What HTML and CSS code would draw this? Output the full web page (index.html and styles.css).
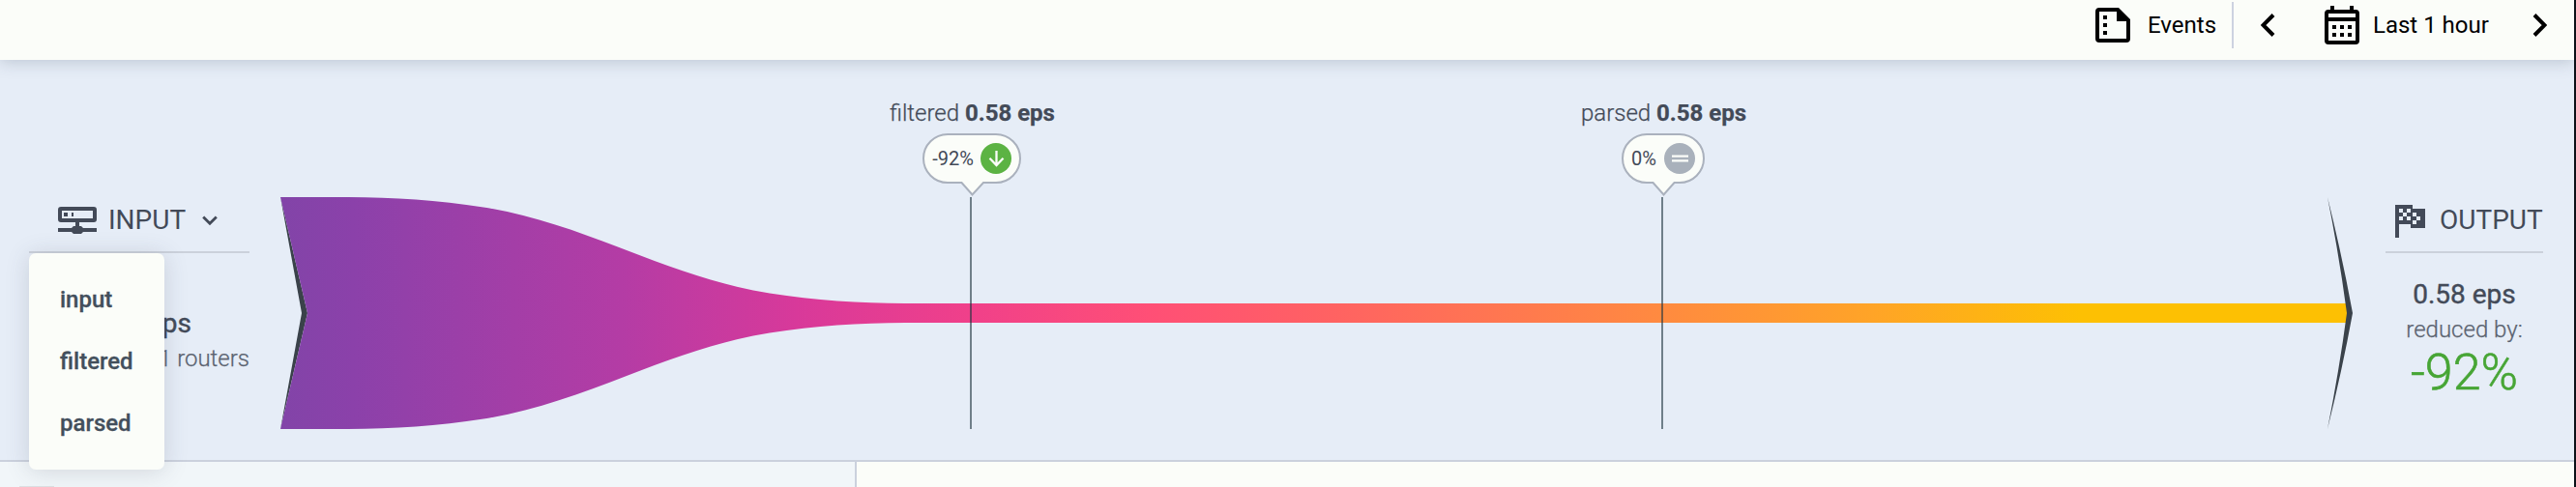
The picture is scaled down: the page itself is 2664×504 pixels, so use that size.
FILE: index.html
```html
<!DOCTYPE html>
<html lang="en">
<head>
<meta charset="utf-8">
<title>Pipeline</title>
<link rel="stylesheet" href="styles.css">
</head>
<body>
<div class="page">
  <header class="topbar">
    <div class="tool events">
      <svg width="36" height="36" viewBox="0 0 36 36"><path fill-rule="evenodd" d="M4 0H24L36 12V32Q36 36 32 36H4Q0 36 0 32V4Q0 0 4 0ZM4 4V32H32V14H22V4Z"/><path d="M8 8h4v4H8zM8 16h4v4H8zM8 24h4v4H8z"/></svg>
      <span>Events</span>
    </div>
    <div class="range">
      <svg class="prev" width="15" height="24" viewBox="0 0 15 24"><path class="chev" d="M13 1.500 2.500 12 13 22.500"/></svg>
      <svg class="calendar" width="36" height="40" viewBox="0 0 36 40"><path fill-rule="evenodd" d="M6 0h4v4h16V0h4v4h2q4 0 4 4v28q0 4-4 4H4q-4 0-4-4V8q0-4 4-4h2zM4 8v4h28V8zM4 16v20h28V16z"/><path d="M8 20h4v4H8zM16 20h4v4h-4zM24 20h4v4h-4zM8 28h4v4H8zM16 28h4v4h-4zM24 28h4v4h-4z"/></svg>
      <span>Last 1 hour</span>
      <svg class="next" width="15" height="24" viewBox="0 0 15 24"><path class="chev" d="M2 1.500 12.500 12 2 22.500"/></svg>
    </div>
  </header>

  <main class="flow">
    <section class="side side-in">
      <div class="heading">
        <svg width="40" height="28" viewBox="0 0 40 28"><path fill-rule="evenodd" d="M3 0H37Q40 0 40 3V13Q40 16 37 16H22V20H24L26 22H40V26H26L24 28H16L14 26H0V22H14L16 20H18V16H3Q0 16 0 13V3Q0 0 3 0ZM4 4V12H36V4Z"/><path d="M6 6h4v4H6zM14 6h2v4h-2z"/></svg>
        <span>INPUT</span>
        <svg class="caret" width="16" height="11" viewBox="0 0 16 11"><path d="M1.200 1.500 8 8.300 14.800 1.500"/></svg>
      </div>
      <div class="eps">eps</div>
      <div class="note">1 routers</div>
      <div class="menu">
        <div class="item">input</div>
        <div class="item">filtered</div>
        <div class="item">parsed</div>
      </div>
    </section>

    <section class="chart">
      <svg class="funnel" width="2144" height="240" viewBox="0 0 2144 240">
        <defs>
          <linearGradient id="stream" gradientUnits="userSpaceOnUse" x1="0" y1="0" x2="2138" y2="0">
            <stop offset="0" stop-color="#8244a8"/>
            <stop offset=".035" stop-color="#8b41aa"/>
            <stop offset=".165" stop-color="#b43ca5"/>
            <stop offset=".25" stop-color="#d8399a"/>
            <stop offset=".333" stop-color="#f0408a"/>
            <stop offset=".42" stop-color="#ff4f76"/>
            <stop offset=".5" stop-color="#ff6064"/>
            <stop offset=".667" stop-color="#ff8a40"/>
            <stop offset=".77" stop-color="#ffa427"/>
            <stop offset=".87" stop-color="#fdc003"/>
            <stop offset="1" stop-color="#fdc003"/>
          </linearGradient>
        </defs>
        <path fill="#3a424a" d="M0 0 28 120 0 240 22 120Z"/>
        <path fill="url(#stream)" d="M0 0H70C117 0 163 3.300 210 10.500C259.300 18.100 308.700 36 358 55C407 74 456.700 91.900 506 99.500C553 106.700 599 110 646 110H2138V130H646C599 130 553 133.300 506 140.500C456.700 148.100 407 166 358 185C308.700 204 259.300 221.900 210 229.500C163 236.700 117 240 70 240H0L28 120Z"/>
        <path fill="#3a424a" d="M2117 0Q2132 60 2143 120Q2132 180 2117 240Q2129 180 2137 120Q2129 60 2117 0Z"/>
        <path class="mark" d="M714 0V240M1429 0V240"/>
      </svg>
      <div class="marker marker-filtered">
        <div class="label">filtered <b>0.58 eps</b></div>
        <div class="bubble">
          <svg class="shell" width="102" height="66" viewBox="0 0 102 66"><path d="M26 1H76A25 25 0 0 1 76 51H63L51.500 63.500 40.500 51H26A25 25 0 0 1 26 1Z"/></svg>
          <span>-92%</span>
          <svg width="32" height="32" viewBox="0 0 32 32"><circle cx="16" cy="16" r="16" fill="#5cb343"/><path class="glyph" d="M16.500 8V23M9.500 15.800 16.500 23 23.500 15.800"/></svg>
        </div>
      </div>
      <div class="marker marker-parsed">
        <div class="label">parsed <b>0.58 eps</b></div>
        <div class="bubble small">
          <svg class="shell" width="86" height="66" viewBox="0 0 86 66"><path d="M26 1H60A25 25 0 0 1 60 51H54.500L43.500 63.500 32.500 51H26A25 25 0 0 1 26 1Z"/></svg>
          <span>0%</span>
          <svg width="32" height="32" viewBox="0 0 32 32"><circle cx="16" cy="16" r="16" fill="#a9b1bb"/><path class="glyph" d="M8 13.700H25M8 18.300H25"/></svg>
        </div>
      </div>
    </section>

    <section class="side side-out">
      <div class="heading">
        <svg width="31" height="34" viewBox="0 0 31 34"><path d="M0 0H18V4H31V24H16V20H4V34H0Z"/><path fill="#e6edf7" d="M4 4h4v4H4zM12 4h4v4h-4zM8 8h4v4H8zM4 12h4v4H4zM12 12h4v4h-4zM18 8h4v4h-4zM22 12h4v4h-4zM18 16h4v4h-4z"/></svg>
        <span>OUTPUT</span>
      </div>
      <div class="eps">0.58 eps</div>
      <div class="note">reduced by:</div>
      <div class="delta">-92%</div>
    </section>
  </main>

  <div class="panes">
    <div class="pane-left"><div class="stub"></div></div>
    <div class="pane-right"></div>
  </div>
</div>
</body>
</html>
```
FILE: styles.css
```css
* { box-sizing: border-box; }
body { margin: 0; background: #0c1118; font-family: Roboto, "Liberation Sans", sans-serif; }
svg { display: block; flex: none; }
.page { width: 2662px; height: 504px; overflow: hidden; background: #fbfdf9; display: flex; flex-direction: column; }

.topbar { position: relative; z-index: 2; height: 62px; flex: none; display: flex; justify-content: flex-end; padding: 2px 27px 0 0; background: #fbfdf9; box-shadow: 0 2px 16px rgba(60, 75, 100, .25); font-size: 24px; line-height: 48px; color: #000; }
.tool, .range { display: flex; height: 48px; align-items: center; }
.events { width: 143px; border-right: 2px solid #cdd2e0; }
.events span { margin-left: 18px; }
.range { width: 325px; }
.prev { margin-left: 28px; }
.calendar { margin-left: 51px; }
.range span { margin-left: 14px; }
.next { margin-left: auto; margin-right: 1px; }
.chev { fill: none; stroke: #000; stroke-width: 4; }

.flow { height: 416px; flex: none; display: flex; background: #e6edf7; border-bottom: 2px solid #cbd1dd; color: #434a58; }
.side { position: relative; display: flex; flex-direction: column; }
.side-in { width: 228px; margin: 130px 32px 0 30px; }
.side-out { width: 163px; margin: 130px 32px 0 33px; align-items: center; }
.heading { width: 100%; height: 70px; display: flex; align-items: center; padding-top: 4px; border-bottom: 2px solid #cbd1db; font-size: 28px; line-height: 64px; fill: #434a58; }
.side-in .heading { padding-left: 30px; }
.side-out .heading { padding-left: 10px; }
.side-in .heading span { margin-left: 12px; }
.side-out .heading span { margin-left: 15px; }
.side-out .heading svg { margin-top: 2px; }
.caret { margin-left: 17px; fill: none; stroke: #434a58; stroke-width: 2.800; }
.eps { margin-top: 25px; font-size: 28px; line-height: 36px; -webkit-text-stroke: .4px; }
.side-in .eps { margin-top: 55px; padding-left: 123px; }
.note { font-size: 24px; line-height: 36px; font-weight: 300; color: #5b6370; -webkit-text-stroke: .25px; }
.side-in .note { text-align: right; }
.delta { margin-top: 1px; font-size: 52px; line-height: 52px; font-weight: 300; color: #47a535; -webkit-text-stroke: .6px; }

.menu { position: absolute; z-index: 3; left: 0; top: 70px; width: 140px; height: 224px; padding: 16px 32px; border-radius: 7px; background: #fbfdf9; box-shadow: 0 2px 24px rgba(67, 74, 88, .18); }
.item { height: 64px; font-size: 24px; line-height: 64px; font-weight: 500; color: #434f5c; -webkit-text-stroke: .3px; }

.chart { position: relative; width: 2144px; padding-top: 142px; }
.mark { stroke: #20363f; stroke-opacity: .6; stroke-width: 2; }
.marker { position: absolute; top: 36px; width: 240px; display: flex; flex-direction: column; align-items: center; }
.marker-filtered { left: 595px; }
.marker-parsed { left: 1310px; }
.label { height: 40px; padding-left: 1px; font-size: 24px; line-height: 39px; font-weight: 300; white-space: nowrap; -webkit-text-stroke: .25px; }
.label b { font-weight: 700; }
.bubble { position: relative; width: 102px; height: 66px; display: flex; justify-content: flex-end; gap: 7px; padding: 10px 10px 0 0; font-size: 20px; line-height: 32px; color: #434a58; }
.bubble.small { width: 86px; gap: 8px; }
.bubble > * { position: relative; }
.bubble .shell { position: absolute; left: 0; top: 0; fill: #fbfdf9; stroke: #aab1bd; stroke-width: 2; }
.glyph { fill: none; stroke: #fbfdf9; stroke-width: 2.300; }

.panes { flex: 1; display: flex; }
.pane-left { width: 886px; background: #f1f6f9; border-right: 2px solid #cbd1dd; padding: 25px 0 0 20px; }
.stub { width: 36px; height: 1px; background: #dde0e3; }
.pane-right { flex: 1; }
```
